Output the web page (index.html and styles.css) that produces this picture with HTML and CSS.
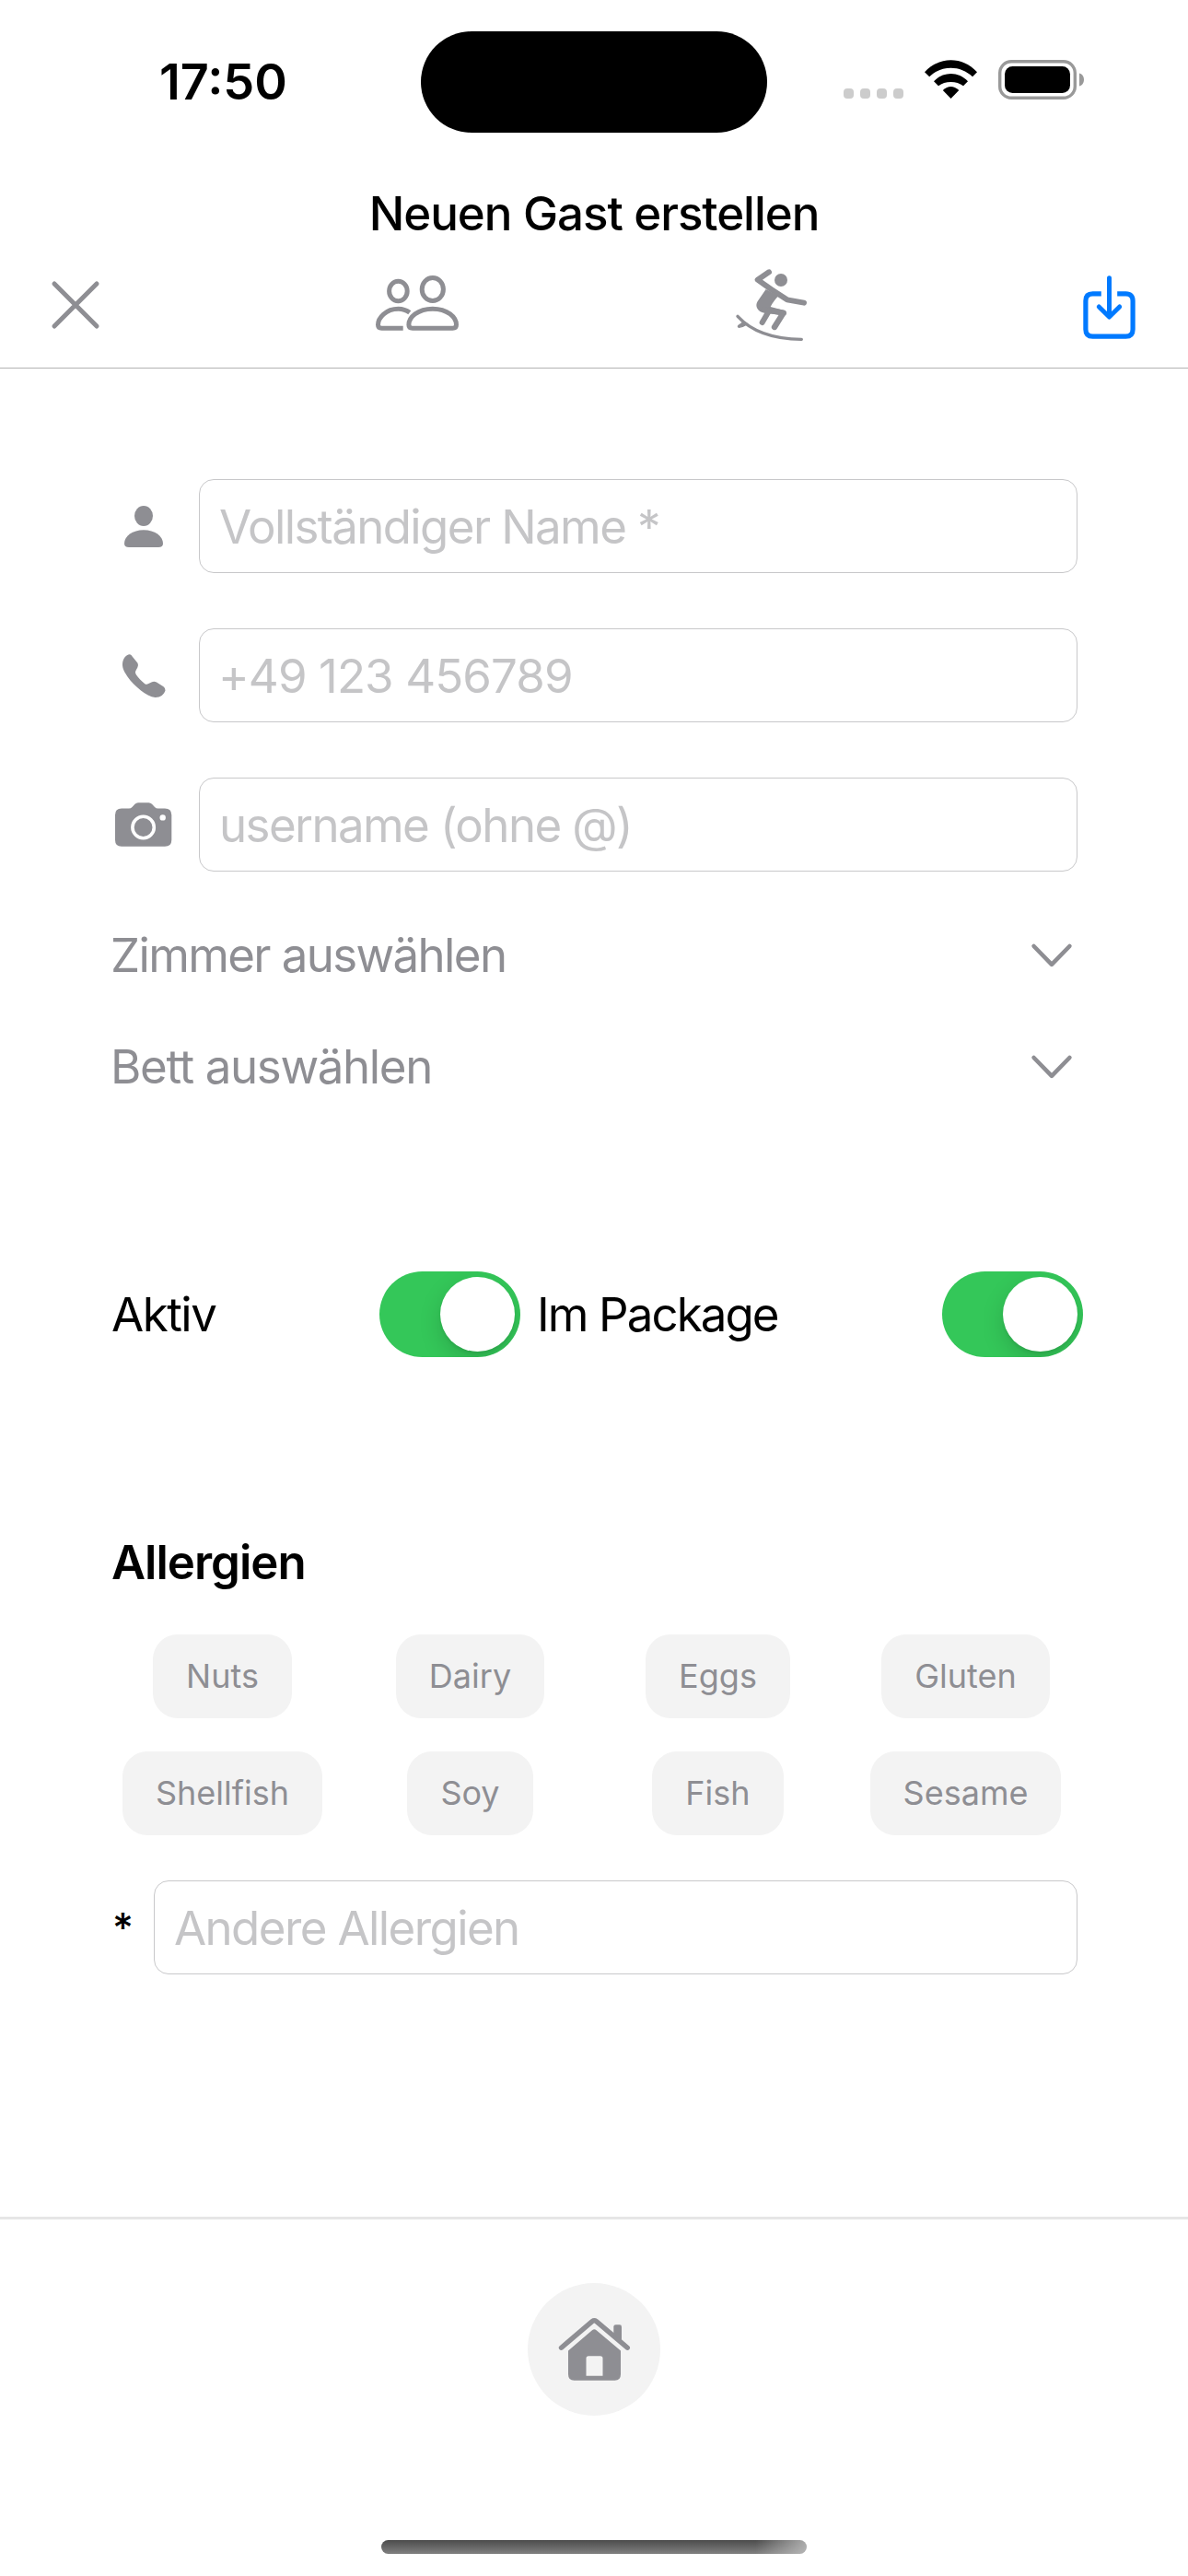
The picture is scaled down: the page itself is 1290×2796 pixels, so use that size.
FILE: index.html
```html
<!DOCTYPE html>
<html lang="de">
<head>
<meta charset="utf-8">
<title>Neuen Gast erstellen</title>
<link rel="stylesheet" href="styles.css">
</head>
<body>
<div class="screen">
  <div class="statusbar">
    <div class="time">17:50</div>
    <div class="island"></div>
    <div class="indicators">
      <div class="dots"><i></i><i></i><i></i><i></i></div>
      <svg class="wifi" viewBox="0 0 57 42" width="57" height="42" fill="#000">
        <path d="M0 13.3C16-4 41-4 57 13.3L52 18.3C39 5.5 18 5.5 5.2 18.3Z"/>
        <path d="M10 23.3C20 12.3 37 12.3 47 23.3L42 28.3C35 22.5 22 22.5 15 28.3Z"/>
        <path d="M19.8 33Q28.5 25 37.3 33L28.5 42Z"/>
      </svg>
      <svg class="battery" viewBox="0 0 94 43" width="94" height="43">
        <rect x="1.7" y="1.7" width="81.6" height="39.6" rx="12.5" fill="none" stroke="#999" stroke-width="3.4"/>
        <rect x="7" y="7" width="71" height="29" rx="8.5" fill="#000"/>
        <path d="M88 14.5C91.500 15.500 93 18.500 93 21.500S91.500 27.500 88 28.500Z" fill="#999"/>
      </svg>
    </div>
  </div>

  <header class="header">
    <h1 class="title">Neuen Gast erstellen</h1>
    <nav class="toolbar">
      <svg class="tool-close" viewBox="0 0 56 56" width="56" height="56" fill="none" stroke="#8e8e93" stroke-width="5" stroke-linecap="round">
        <path d="M5 5L51 51M51 5L5 51"/>
      </svg>
      <svg class="tool-guests" viewBox="0 0 110 80" width="110" height="80" fill="none" stroke="#8e8e93" stroke-width="5">
        <ellipse cx="32.400" cy="26" rx="9.800" ry="10.800"/>
        <ellipse cx="69.800" cy="24" rx="11.600" ry="12.600"/>
        <path d="M48 66.200H91.500Q95.500 66.200 95.500 62.500C95.500 54.500 86 45.200 69.800 45.200S43.900 54.500 43.900 62.500Q43.900 66.200 48 66.200Z"/>
        <path d="M44.800 49.300C41 46.400 37 45.200 32.500 45.200C19 45.200 10.500 55 10.500 62.500Q10.500 66.200 14.500 66.200H37.700"/>
      </svg>
      <svg class="tool-surf" viewBox="0 0 360 360" width="120" height="120" fill="none" stroke="#8e8e93" stroke-linecap="round" stroke-linejoin="round">
        <circle cx="204" cy="102" r="21" fill="#8e8e93" stroke="none"/>
        <path d="M165 76L128 101L172 132L224 166L279 176" stroke-width="18"/>
        <path d="M155 132L196 154C188 162 176 176 170 189L212 200C222 203 224 210 219 217L150 209C128 206 118 186 128 171Z" fill="#8e8e93" stroke="none"/>
        <path d="M150 198L212 209L183 255" stroke-width="19"/>
        <path d="M164 204L143 240" stroke-width="18"/>
        <path d="M63 220C105 266 175 294 271 295" stroke-width="10"/>
        <path d="M81 239L66 250Q62 254 67 256Q79 255 95 245Z" fill="#8e8e93" stroke-width="4"/>
      </svg>
      <svg class="tool-save" viewBox="0 0 80 80" width="80" height="80" fill="none" stroke="#007aff" stroke-width="5.200">
        <path d="M30.800 28.800H21.500Q13.900 28.800 13.900 36.500V67.500Q13.900 75.200 21.500 75.200H57.500Q65.100 75.200 65.100 67.500V36.500Q65.100 28.800 57.500 28.800H48.200"/>
        <path d="M39.500 11.700V53M28.300 43L39.500 54L50.700 43" stroke-width="5" stroke-linecap="round" stroke-linejoin="round"/>
      </svg>
    </nav>
  </header>

  <main class="form">
    <section class="fields">
      <div class="field-row">
        <svg viewBox="0 0 72 72" width="72" height="72" fill="#8e8e93">
          <ellipse cx="36" cy="25" rx="10" ry="11"/>
          <path d="M20 59Q15 59 15 55C15 47 24 40.300 36 40.300S57 47 57 55Q57 59 52 59Z"/>
        </svg>
        <div class="input">Vollständiger Name *</div>
      </div>
      <div class="field-row">
        <svg viewBox="0 0 72 72" width="72" height="72" fill="#8e8e93">
          <path d="M21 13.200Q22.500 13.400 24 16L29.500 22.800Q30.600 25 29.300 27.500L27.300 31.300Q26.300 33 27.800 35.200C30.500 39.200 33.500 42.200 37 44.900Q39 46.400 40.800 45.300L45 43.300Q47.500 42.200 50 43.600L57.500 48.300Q60 50.300 59.500 52.500C58 57 54 60.200 48.500 60C43.500 59.500 38 56.500 33 52.500C27.500 48 22.500 43.500 18.500 37.500C15.500 33 12.700 28.500 13 23.500C13.300 18 16.500 13.500 21 13.200Z"/>
        </svg>
        <div class="input input-tel">+49 123 456789</div>
      </div>
      <div class="field-row">
        <svg viewBox="0 0 72 72" width="72" height="72">
          <path d="M12 18.500H20Q22 18.500 23.500 17L26.500 13.800Q28 12.300 30 12.300H41.500Q43.500 12.300 45 13.800L48 17Q49.500 18.500 51.500 18.500H59Q66.300 18.500 66.300 25.500V52.700Q66.300 59.700 59 59.700H12Q5 59.700 5 52.700V25.500Q5 18.500 12 18.500Z" fill="#8e8e93"/>
          <circle cx="35.600" cy="39" r="11.700" fill="none" stroke="#fff" stroke-width="3.600"/>
          <circle cx="56.700" cy="28.400" r="3.200" fill="#fff"/>
        </svg>
        <div class="input">username (ohne @)</div>
      </div>
    </section>

    <section class="pickers">
      <div class="picker-row">
        <span>Zimmer auswählen</span>
        <svg viewBox="0 0 48 30" width="48" height="30" fill="none" stroke="#8e8e93" stroke-width="4.600" stroke-linecap="round" stroke-linejoin="round"><path d="M4.600 5L24 24.800L43.400 5"/></svg>
      </div>
      <div class="picker-row picker-bed">
        <span>Bett auswählen</span>
        <svg viewBox="0 0 48 30" width="48" height="30" fill="none" stroke="#8e8e93" stroke-width="4.600" stroke-linecap="round" stroke-linejoin="round"><path d="M4.600 5L24 24.800L43.400 5"/></svg>
      </div>
    </section>

    <section class="toggles">
      <div class="toggle-cell toggle-active"><span>Aktiv</span><div class="switch"><i></i></div></div>
      <div class="toggle-cell"><span>Im Package</span><div class="switch"><i></i></div></div>
    </section>

    <section class="allergies">
      <h2 class="subtitle">Allergien</h2>
      <div class="chips">
        <span class="chip">Nuts</span>
        <span class="chip">Dairy</span>
        <span class="chip">Eggs</span>
        <span class="chip">Gluten</span>
        <span class="chip">Shellfish</span>
        <span class="chip">Soy</span>
        <span class="chip">Fish</span>
        <span class="chip">Sesame</span>
      </div>
      <div class="other-row">
        <span class="star">*</span>
        <div class="input">Andere Allergien</div>
      </div>
    </section>
  </main>

  <footer class="footer">
    <div class="home">
      <svg viewBox="0 0 144 144" width="144" height="144" fill="#8e8e93">
        <path d="M36.500 70.200L70 41.700Q72.300 40 74.600 41.700L108.300 70.200" fill="none" stroke="#8e8e93" stroke-width="5.400" stroke-linecap="round"/>
        <path d="M93.300 56V47.500Q93.300 45.200 95.600 45.200H99.700Q102 45.200 102 47.500V63.500Z"/>
        <path fill-rule="evenodd" d="M70 51.200Q72.300 49.300 74.600 51.200L101 73.500V99Q101 105.800 94.500 105.800H50.500Q44 105.800 44 99V73.500ZM66 79.200Q63.500 79.200 63.500 81.700V100.700H81.500V81.700Q81.500 79.200 79 79.200Z"/>
      </svg>
    </div>
    <div class="home-indicator"></div>
  </footer>
</div>
</body>
</html>
```
FILE: styles.css
```css
* {
  box-sizing: border-box;
}

body {
  margin: 0;
  background: #fff;
  color: #000;
  font-family: Inter, "Liberation Sans", sans-serif;
  font-size: 51px;
  line-height: 62px;
}

h1,
h2 {
  margin: 0;
}

svg {
  display: block;
  flex: none;
}

.screen {
  width: 1290px;
  height: 2796px;
  display: flex;
  flex-direction: column;
}

/* Status bar */
.statusbar {
  height: 177px;
  padding: 34px 112px 0 173px;
  display: grid;
  grid-template-columns: 284px 376px 1fr;
}

.time {
  font-size: 54px;
  font-weight: 600;
  line-height: 109px;
}

.island {
  height: 110px;
  border-radius: 55px;
  background: #000;
}

.indicators {
  display: flex;
  justify-content: flex-end;
  padding-top: 31px;
}

.dots {
  display: flex;
  gap: 7px;
  padding-top: 31px;
  margin-right: 23px;
}

.dots i {
  width: 11px;
  height: 11px;
  border-radius: 4px;
  background: #ccc;
}

.battery {
  margin-left: 23px;
}

/* Header */
.header {
  height: 223px;
  padding-top: 24px;
  border-bottom: 1px solid #b2b2b2;
}

.title {
  font-size: 51px;
  font-weight: 500;
  letter-spacing: -1.03px;
  text-align: center;
}

.toolbar {
  display: flex;
  align-items: flex-start;
  padding: 7px 45px 0 54px;
}

.tool-close {
  margin-top: 33px;
}

.tool-guests {
  margin-top: 20px;
  margin-left: 290px;
}

.tool-surf {
  margin-left: 270px;
}

.tool-save {
  margin-top: 20px;
  margin-left: auto;
}

/* Form */
.form {
  flex: 1;
  padding: 120px 120px 0;
}

.fields {
  display: flex;
  flex-direction: column;
  gap: 60px;
}

.field-row {
  display: flex;
  align-items: center;
  gap: 24px;
}

.input {
  flex: 1;
  height: 102px;
  padding: 20px 21px 18px;
  border: 1px solid #c8c8ca;
  border-radius: 16px;
  color: #c5c5c7;
  letter-spacing: -1.6px;
  white-space: nowrap;
}

.input-tel {
  padding-left: 20px;
  letter-spacing: -0.9px;
}

.pickers {
  padding-top: 60px;
  color: #8e8e93;
  letter-spacing: -1.63px;
}

.picker-row {
  height: 121px;
  padding-right: 4px;
  padding-bottom: 59px;
  display: flex;
  align-items: center;
  justify-content: space-between;
}

.picker-bed {
  letter-spacing: -1.36px;
}

.toggles {
  display: grid;
  grid-template-columns: 445px 593px;
  column-gap: 18px;
  margin-top: 132px;
  letter-spacing: -1.9px;
}

.toggle-cell {
  display: flex;
  align-items: center;
  justify-content: space-between;
}

.toggle-active {
  padding-left: 1px;
  letter-spacing: -1.5px;
}

.switch {
  width: 153px;
  height: 93px;
  padding: 6px;
  border-radius: 47px;
  background: #34c759;
  display: flex;
  justify-content: flex-end;
  overflow: hidden;
}

.switch i {
  width: 81px;
  height: 81px;
  border-radius: 50%;
  background: #fff;
  box-shadow: 0 9px 24px rgba(0, 0, 0, 0.15), 0 3px 3px rgba(0, 0, 0, 0.06);
}

.subtitle {
  padding-left: 1px;
  font-size: 51px;
  font-weight: 600;
  letter-spacing: -1px;
}

.allergies {
  padding-top: 192px;
}

.chips {
  display: grid;
  grid-template-columns: repeat(4, 1fr);
  gap: 36px 26px;
  justify-items: center;
  padding-top: 47px;
}

.chip {
  height: 91px;
  padding: 0 36px;
  border-radius: 27px;
  background: #f3f3f3;
  color: #8e8e93;
  font-size: 36px;
  line-height: 91px;
}

.other-row {
  display: flex;
  align-items: center;
  padding-top: 49px;
}

.star {
  width: 47px;
  padding-left: 2px;
  font-size: 44px;
  font-weight: 500;
}

/* Footer */
.footer {
  height: 390px;
  border-top: 3px solid #e6e6e6;
  display: flex;
  flex-direction: column;
  align-items: center;
}

.home {
  width: 144px;
  height: 144px;
  margin-top: 69px;
  border-radius: 50%;
  background: #f3f3f3;
}

.home-indicator {
  width: 462px;
  height: 15px;
  margin-top: 135px;
  border-radius: 8px;
  background: linear-gradient(90deg, rgba(200, 200, 200, 0) 88%, rgba(200, 200, 200, 0.75)), linear-gradient(#4c4c4c, #808080);
}
```
